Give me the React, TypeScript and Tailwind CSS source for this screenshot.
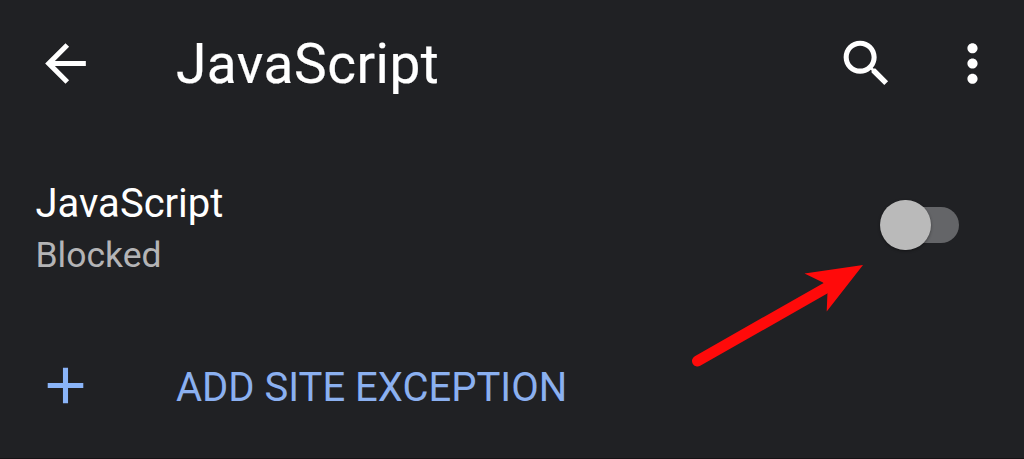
import { ReactNode, useState } from 'react';

interface IconProps {
    path: string;
    className?: string;
}

const icons = {
    back: 'M20 11H7.83l5.59-5.59L12 4l-8 8 8 8 1.41-1.41L7.83 13H20v-2z',
    search: 'M15.5 14h-.79l-.28-.27C15.41 12.59 16 11.11 16 9.5 16 5.91 13.09 3 9.5 3S3 5.91 3 9.5 5.91 16 9.5 16c1.61 0 3.09-.59 4.23-1.57l.27.28v.79l5 4.99L20.49 19l-4.99-5zm-6 0C7.01 14 5 11.99 5 9.5S7.01 5 9.5 5 14 7.01 14 9.5 11.99 14 9.5 14z',
    more: 'M12 8c1.1 0 2-.9 2-2s-.9-2-2-2-2 .9-2 2 .9 2 2 2zm0 2c-1.1 0-2 .9-2 2s.9 2 2 2 2-.9 2-2-.9-2-2-2zm0 6c-1.1 0-2 .9-2 2s.9 2 2 2 2-.9 2-2-.9-2-2-2z',
    add: 'M19 13h-6v6h-2v-6H5v-2h6V5h2v6h6v2z',
};

const Icon = ({ path, className = '' }: IconProps) => (
    <svg viewBox="0 0 24 24" fill="currentColor" className={`size-[61px] shrink-0 ${className}`}>
        <path d={path} />
    </svg>
);

const IconButton = ({ label, children }: { label: string, children: ReactNode }) => (
    <button type="button" aria-label={label} className="shrink-0">
        {children}
    </button>
);

const Arrow = () => (
    <svg viewBox="0 0 180 110" className="pointer-events-none absolute left-[688px] top-[260px] h-[110px] w-[180px]">
        <path d="M9.5 101 L137 28.5" stroke="#ff0a0a" strokeWidth="11" strokeLinecap="round" />
        <path d="M175 5 L116.5 13.5 L135 22.5 L139.5 32 L138.7 51.5 Z" fill="#ff0a0a" />
    </svg>
);

const App = () => {
    const [enabled, setEnabled] = useState(false);

    return (
        <div className="relative flex h-[459px] w-[1024px] flex-col overflow-hidden border-b border-[#161416] bg-[#202124] font-[Roboto,sans-serif] text-white">
            <header className="flex h-[127px] items-center pl-[35px] pr-[21px]">
                <IconButton label="Back">
                    <Icon path={icons.back} />
                </IconButton>
                <h1 className="ml-20 grow text-[55px] leading-[64px] tracking-[0.5px] [-webkit-text-stroke:0.2px_white]">JavaScript</h1>
                <IconButton label="Search">
                    <Icon path={icons.search} />
                </IconButton>
                <IconButton label="More options">
                    <Icon path={icons.more} className="ml-[45px]" />
                </IconButton>
            </header>

            <div className="flex h-[196px] items-center justify-between pl-[35.5px] pr-[65px]">
                <div className="pt-2">
                    <p className="text-[40px] leading-[52px]">JavaScript</p>
                    <p className="text-[35.5px] leading-[50px] text-[#b4b4b6]">Blocked</p>
                </div>
                <button
                    type="button"
                    role="switch"
                    aria-label="JavaScript"
                    aria-checked={enabled}
                    onClick={() => setEnabled(!enabled)}
                    className={`flex h-9 w-[75px] items-center rounded-full bg-[#646568] ${enabled ? 'justify-end' : 'justify-start'}`}
                >
                    <span className="-ml-1 size-[50.5px] shrink-0 rounded-full bg-[#bababa] shadow-[0_1px_3px_rgba(0,0,0,0.4)]" />
                </button>
            </div>

            <button type="button" className="flex h-[124px] items-center pl-[35px] text-left text-[#8ab4f8]">
                <Icon path={icons.add} />
                <span className="ml-20 pt-[5px] text-[40px] leading-[48px] text-[#8bb0f0]">ADD SITE EXCEPTION</span>
            </button>

            <Arrow />
        </div>
    );
};

export default App;
